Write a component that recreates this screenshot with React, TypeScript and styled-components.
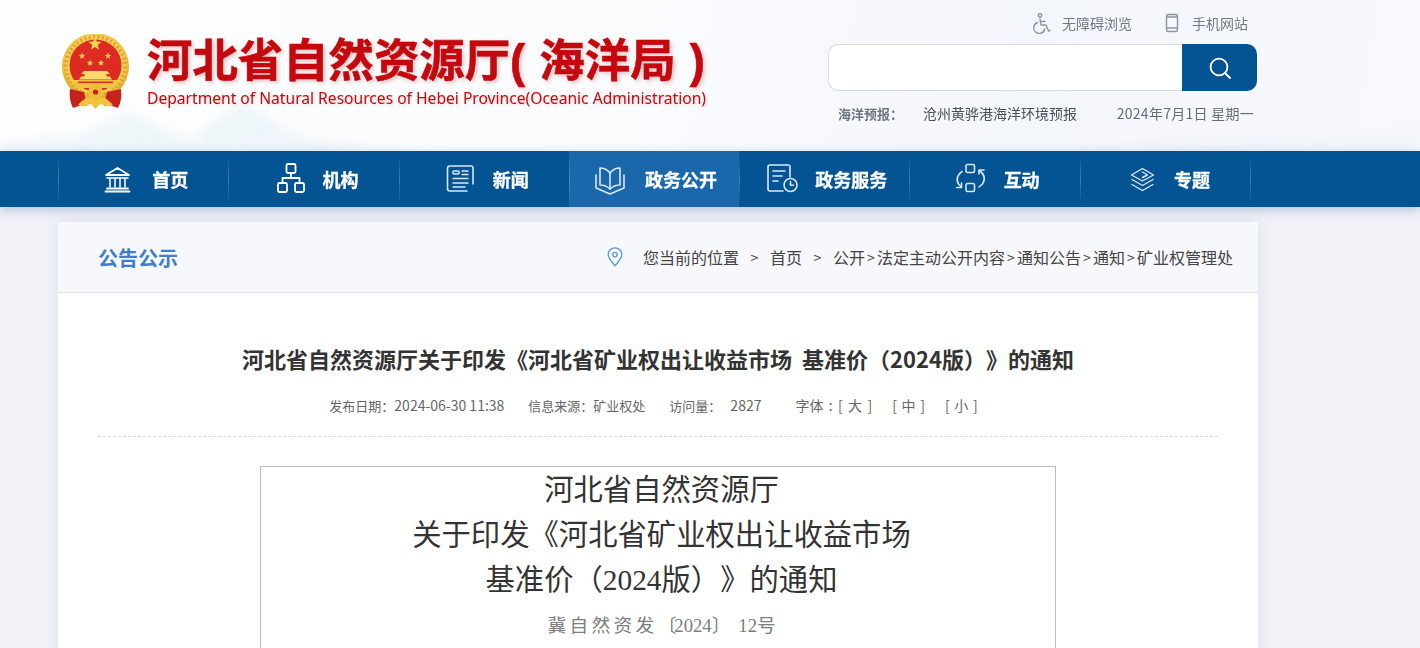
import React from 'react';
import styled, { createGlobalStyle } from 'styled-components';

const Global = createGlobalStyle`
  html, body { margin: 0; padding: 0; height: 648px; overflow: hidden; background: #f0f2f8; }
  body { font-family: "Noto Sans CJK SC", "Noto Sans", sans-serif; color: #333; text-spacing-trim: space-all; font-feature-settings: "chws" 0, "palt" 0, "halt" 0; }
  #root { height: 648px; overflow: hidden; }
`;

const Page = styled.div`
  display: flex;
  flex-direction: column;
  height: 648px;
  overflow: hidden;
`;

const Header = styled.header`
  position: relative;
  height: 151px;
  flex: none;
  background: linear-gradient(100deg, #fdfefe 0%, #fafbfd 45%, #f3f6fb 72%, #f7f9fc 100%);
  overflow: hidden;
`;

const Mountains = styled.svg`
  position: absolute;
  left: 0;
  bottom: 0;
  width: 1420px;
  height: 60px;
  opacity: 0.6;
`;

const HeaderInner = styled.div`
  position: relative;
  display: flex;
  justify-content: space-between;
  width: 1199px;
  height: 151px;
  margin-left: 58px;
`;

const Logo = styled.div`
  display: flex;
  align-items: flex-start;
  gap: 14px;
  padding: 34px 0 0 2px;
`;

const LogoText = styled.div`
  display: flex;
  flex-direction: column;
  padding-left: 1px;
`;

const LogoTitle = styled.div`
  font-family: "Liberation Sans", "Noto Sans CJK SC", sans-serif;
  font-size: 45.4px;
  line-height: 51px;
  margin-top: 2px;
  font-weight: 700;
  color: #c5080e;
  white-space: pre;
  word-spacing: 1.5px;
  -webkit-text-stroke: 0.6px #c5080e;
  text-shadow: 2px 2px 4px rgba(140, 30, 30, 0.28);
`;

const LogoSub = styled.div`
  font-family: "Noto Sans", sans-serif;
  font-size: 15.62px;
  line-height: 22px;
  color: #c5080e;
  white-space: nowrap;
  text-shadow: 1px 1px 3px rgba(140, 30, 30, 0.2);
`;

const Tools = styled.div`
  width: 429px;
  display: flex;
  flex-direction: column;
`;

const Links = styled.div`
  display: flex;
  justify-content: flex-end;
  align-items: center;
  height: 44px;
  padding: 2px 9px 0 0;
  gap: 30px;
  box-sizing: border-box;
`;

const LinkItem = styled.span`
  display: flex;
  align-items: center;
  gap: 8px;
  font-size: 14px;
  line-height: 20px;
  color: #707a86;
`;

const LinkIcon = styled.svg`
  width: 22px;
  height: 22px;
  fill: none;
  stroke: #8b95a1;
  stroke-width: 1.4;
  stroke-linecap: round;
  stroke-linejoin: round;
`;

const Search = styled.div`
  display: flex;
  height: 47px;
`;

const SearchInput = styled.div`
  flex: 1;
  box-sizing: border-box;
  background: #fff;
  border: 1px solid #d9dbe2;
  border-right: none;
  border-radius: 10px 0 0 10px;
`;

const SearchButton = styled.div`
  width: 75px;
  border-radius: 0 10px 10px 0;
  background: #045493;
  display: flex;
  align-items: center;
  justify-content: center;
`;

const Forecast = styled.div`
  display: flex;
  align-items: center;
  height: 20px;
  margin-top: 12px;
  padding: 0 3px 0 10px;
  font-size: 14px;
  color: #4a4f57;
`;

const ForecastLabel = styled.span`
  color: #6d7680;
  font-weight: 700;
  font-size: 13px;
  width: 85px;
`;

const ForecastDate = styled.span`
  margin-left: auto;
  color: #666d76;
  letter-spacing: 0.27px;
`;

const Nav = styled.nav`
  position: relative;
  z-index: 2;
  flex: none;
  display: flex;
  height: 56px;
  padding-left: 58px;
  background: #045493;
  box-shadow: 0 3px 10px rgba(40, 70, 130, 0.28);
`;

const NavItem = styled.div<{ $active?: boolean }>`
  position: relative;
  width: 170.3px;
  box-sizing: border-box;
  padding-left: 4px;
  display: flex;
  align-items: center;
  justify-content: center;
  gap: 16px;
  background: ${(p) => (p.$active ? '#1a67ab' : 'transparent')};
  font-size: 18px;
  font-weight: 700;
  color: #fff;
  -webkit-text-stroke: 0.3px #fff;
  &::before {
    content: '';
    position: absolute;
    left: 0;
    top: 4px;
    bottom: 4px;
    width: 1px;
    background: linear-gradient(180deg, rgba(255,255,255,0), rgba(255,255,255,0.24) 50%, rgba(255,255,255,0));
  }
`;

const NavEnd = styled.div`
  width: 1px;
  margin: 4px 0;
  background: linear-gradient(180deg, rgba(255,255,255,0), rgba(255,255,255,0.24) 50%, rgba(255,255,255,0));
`;

const Main = styled.main`
  flex: 1;
  padding: 15px 0 0 58px;
  background: #f0f2f8;
`;

const Card = styled.section`
  width: 1200px;
  height: 600px;
  background: #fff;
  box-shadow: 0 0 14px rgba(60, 80, 130, 0.1);
`;

const CardHead = styled.div`
  display: flex;
  align-items: center;
  justify-content: space-between;
  height: 71px;
  padding: 0 25px 1px 40px;
  box-sizing: border-box;
  background: #f7f8fb;
  border-bottom: 1px solid #e2e3e6;
`;

const CardTitle = styled.h2`
  margin: 2px 0 0;
  font-size: 20px;
  line-height: 28px;
  font-weight: 700;
  color: #3f7ecf;
`;

const Crumbs = styled.div`
  display: flex;
  align-items: center;
  font-size: 16px;
  line-height: 24px;
  color: #444;
  white-space: nowrap;
`;

const PinBox = styled.span`
  display: flex;
  margin-right: 20px;
`;

const Gap = styled.span`
  width: 31px;
  text-align: center;
  font-size: 14px;
`;

const Arrow = styled.span`
  display: inline-block;
  width: 12px;
  text-align: center;
  font-size: 14px;
`;

const CardBody = styled.div`
  padding: 0 40px;
`;

const Headline = styled.h1`
  margin: 0;
  padding-top: 48px;
  font-size: 22px;
  line-height: 34px;
  font-weight: 700;
  text-align: center;
  color: #333;
  white-space: nowrap;
  word-spacing: 5px;
`;

const Meta = styled.div`
  display: flex;
  justify-content: center;
  align-items: center;
  height: 24px;
  margin-top: 18px;
  padding: 0 9px 19px 0;
  border-bottom: 1px dashed #d9d9d9;
  font-size: 13px;
  color: #666;
  white-space: nowrap;
`;

const MetaItem = styled.span<{ $gap?: number }>`
  margin-right: ${(p) => p.$gap ?? 24}px;
`;

const MetaValue = styled.span<{ $indent?: number; $words?: number }>`
  font-size: 14px;
  margin-left: ${(p) => p.$indent ?? 0}px;
  word-spacing: ${(p) => p.$words ?? 0}px;
`;

const Doc = styled.div`
  width: 796px;
  height: 300px;
  margin: 29px 0 0 162px;
  padding: 1px 0 0 7px;
  box-sizing: border-box;
  border: 1px solid #bcbcbc;
  text-align: center;
`;

const DocTitle = styled.div`
  font-family: "Liberation Serif", "Noto Sans CJK SC", serif;
  font-size: 29.33px;
  line-height: 45px;
  color: #333;
  white-space: nowrap;
`;

const DocNo = styled.div`
  font-family: "Liberation Serif", "Noto Sans CJK SC", serif;
  font-size: 18.67px;
  line-height: 46px;
  color: #7d7d7d;
  white-space: nowrap;
`;

const Spaced = styled.span<{ $s: number }>`
  letter-spacing: ${(p) => p.$s}px;
`;

const NavSvg = styled.svg<{ $soft?: boolean; $w?: number }>`
  width: 34px;
  height: 34px;
  flex: none;
  fill: none;
  stroke: ${(p) => (p.$soft ? '#d8e6f5' : '#fff')};
  stroke-width: ${(p) => p.$w ?? 1.8};
  stroke-linejoin: round;
  stroke-linecap: round;
`;

const NavGlyph: React.FC<{ children: React.ReactNode; soft?: boolean; w?: number }> = ({ children, soft, w }) => (
  <NavSvg viewBox="0 0 34 34" aria-hidden="true" $soft={soft} $w={w}>
    {children}
  </NavSvg>
);

const Star = ({ x, y, r }: { x: number; y: number; r: number }) => {
  const pts: string[] = [];
  for (let i = 0; i < 10; i++) {
    const a = -Math.PI / 2 + (i * Math.PI) / 5;
    const q = i % 2 === 0 ? r : r * 0.42;
    pts.push(`${(x + q * Math.cos(a)).toFixed(2)},${(y + q * Math.sin(a)).toFixed(2)}`);
  }
  return <polygon points={pts.join(' ')} fill="#f8d24c" />;
};

const Emblem = () => (
  <svg width="72" height="78" viewBox="0 0 72 78" aria-hidden="true">
    <defs>
      <radialGradient id="g" cx="50%" cy="45%" r="55%">
        <stop offset="78%" stopColor="#f5cf58" />
        <stop offset="100%" stopColor="#dca222" />
      </radialGradient>
      <filter id="soft" x="-10%" y="-10%" width="120%" height="120%">
        <feGaussianBlur stdDeviation="0.35" />
      </filter>
    </defs>
    <g filter="url(#soft)">
      <circle cx="35.5" cy="32.5" r="33.5" fill="url(#g)" />
      <circle cx="35.5" cy="32.5" r="29.5" fill="none" stroke="#e0a62a" strokeWidth="4" strokeDasharray="2 2.4" />
      <circle cx="35.5" cy="31.5" r="26" fill="#dd2a20" />
      <Star x={35} y={10} r={7} />
      <Star x={22} y={22} r={3.4} />
      <Star x={48} y={22} r={3.4} />
      <Star x={30} y={29} r={3.4} />
      <Star x={41} y={29} r={3.4} />
      <path d="M24 37 h23 l3 3 h-3.5 v2.5 h3.5 l2 3 h-33 l2-3 h3.5 v-2.5 h-3.5z" fill="#f8da6c" />
      <path d="M14 46 h43 v3 l-3 5 h-37 l-3-5z" fill="#f2c33f" />
      <rect x="18" y="47.5" width="35" height="1.6" fill="#dd2a20" />
      <path d="M10 55 L24 58 L27 72 C22 71 18 72 13 74 C10 68 9 62 10 55 Z" fill="#c5201a" />
      <path d="M61 55 L47 58 L44 72 C49 71 53 72 58 74 C61 68 62 62 61 55 Z" fill="#c5201a" />
      <path d="M18 71 C22 66 27 63 31 63 L40 63 C44 63 49 66 53 71 C48 74 44 71 40 70 L35.5 75 L31 70 C27 71 23 74 18 71 Z" fill="#f2c33f" />
      <circle cx="35.5" cy="58" r="7.5" fill="#f0bd3a" />
      <circle cx="35.5" cy="58" r="2.6" fill="#c5241c" />
    </g>
  </svg>
);

const items: { label: string; icon: React.ReactNode; active?: boolean }[] = [
  {
    label: '首页',
    icon: (
      <NavGlyph>
        <path d="M4 13 L15.5 6 L27 13 Z" />
        <path d="M8 16 V25 M13 16 V25 M18 16 V25 M23 16 V25 M5 16 H26" strokeWidth="1.5" />
        <path d="M5 26.5 H26 M3.5 29.5 H27.5" />
      </NavGlyph>
    ),
  },
  {
    label: '机构',
    icon: (
      <NavGlyph>
        <rect x="14.5" y="2" width="9" height="9" rx="1.5" />
        <rect x="6" y="21" width="9" height="9" rx="1.5" />
        <rect x="23" y="21" width="9" height="9" rx="1.5" />
        <path d="M19 11 V16 M10.5 21 V16 H27.5 V21" />
      </NavGlyph>
    ),
  },
  {
    label: '新闻',
    icon: (
      <NavGlyph soft w={1.6}>
        <path d="M30 22 V6 a2 2 0 0 0-2-2 H7 a2.5 2.5 0 0 0-2.5 2.5 V26.5 a2.5 2.5 0 0 0 2.5 2.5 H24" />
        <rect x="10" y="9" width="6" height="3" rx="1" />
        <path d="M19 9 H25 M19 12.5 H25 M10 16.5 H25 M10 21 H25 M10 25 H22" strokeWidth="1.4" />
      </NavGlyph>
    ),
  },
  {
    label: '政务公开',
    active: true,
    icon: (
      <NavGlyph soft w={1.6}>
        <path d="M1 13 V26 L15 32 L29 26 V13" />
        <path d="M15 11 C12 7 9 6 5 6 V23 C9 23 12 24 15 27 C18 24 21 23 25 23 V6 C21 6 18 7 15 11 Z" />
        <path d="M15 11 V27" />
      </NavGlyph>
    ),
  },
  {
    label: '政务服务',
    icon: (
      <NavGlyph soft w={1.6}>
        <path d="M25 15 V5 a2 2 0 0 0-2-2 H5 a2 2 0 0 0-2 2 V27 a2 2 0 0 0 2 2 H18" />
        <path d="M8 9 H20 M8 14 H17 M8 19 H13" />
        <circle cx="25.5" cy="23" r="6.5" />
        <path d="M25.5 19.5 V23.2 H28.5" />
      </NavGlyph>
    ),
  },
  {
    label: '互动',
    icon: (
      <NavGlyph soft w={1.6}>
        <rect x="12" y="2.5" width="8.5" height="8" rx="1.5" />
        <rect x="12" y="21.5" width="8.5" height="8" rx="1.5" />
        <path d="M8 9.5 C4 12 1.5 17 4.5 22 L7 24.5" />
        <path d="M2.5 25.5 H7.5 V21" />
        <path d="M25 8.5 C30 11 32 17 28.5 22 L25 25" />
        <path d="M25 8 H30 M25 8 V12" />
      </NavGlyph>
    ),
  },
  {
    label: '专题',
    icon: (
      <NavGlyph soft w={1.4}>
        <path d="M18.5 6.5 L29.5 13 L18.5 19 L7.5 13 Z" />
        <path d="M18.5 10 L23.5 13 L18.5 15.5" />
        <path d="M8 17.5 L18.5 23.5 L29 17.5" />
        <path d="M8 22.5 L18.5 28.5 L29 22.5" />
      </NavGlyph>
    ),
  },
];

export default function App() {
  return (
    <Page>
      <Global />
      <Header>
        <Mountains viewBox="0 0 1420 60" aria-hidden="true">
          <defs>
            <filter id="haze" x="-10%" y="-30%" width="120%" height="160%">
              <feGaussianBlur stdDeviation="5" />
            </filter>
          </defs>
          <g filter="url(#haze)">
            <path d="M30 66 L130 22 L190 50 L240 12 L300 46 L420 66 Z" fill="#dfecf6" opacity="0.75" />
            <path d="M0 66 V50 L70 44 L140 56 L260 50 L480 66 Z" fill="#e9f1f8" opacity="0.8" />
            <path d="M1040 66 C1120 50 1190 54 1260 42 C1320 50 1370 46 1420 36 V66 Z" fill="#eaf0f8" opacity="0.6" />
          </g>
        </Mountains>
        <HeaderInner>
          <Logo>
            <Emblem />
            <LogoText>
              <LogoTitle>河北省自然资源厅( 海洋局 )</LogoTitle>
              <LogoSub>Department of Natural Resources of Hebei Province(Oceanic Administration)</LogoSub>
            </LogoText>
          </Logo>
          <Tools>
            <Links>
              <LinkItem>
                <LinkIcon viewBox="0 0 22 22" aria-hidden="true">
                  <circle cx="8" cy="3.5" r="1.7" />
                  <path d="M8 7 L9 13 H14 L16.5 19 L18 18.4" />
                  <path d="M8.5 9.5 H13" />
                  <path d="M5.5 10.5 A5.6 5.6 0 1 0 12.8 17" />
                </LinkIcon>
                无障碍浏览
              </LinkItem>
              <LinkItem>
                <LinkIcon viewBox="0 0 22 22" aria-hidden="true">
                  <rect x="4.5" y="2.5" width="11" height="17" rx="2" />
                  <path d="M4.5 16 H15.5 M4.5 5 H15.5" />
                </LinkIcon>
                手机网站
              </LinkItem>
            </Links>
            <Search>
              <SearchInput />
              <SearchButton>
                <svg width="24" height="24" viewBox="0 0 24 24" fill="none" stroke="#fff" strokeWidth="1.8" strokeLinecap="round" aria-hidden="true">
                  <circle cx="11" cy="11" r="8.4" />
                  <path d="M17 17 L22 22" />
                </svg>
              </SearchButton>
            </Search>
            <Forecast>
              <ForecastLabel>{'海洋预报\uFF1A'}</ForecastLabel>
              <span>沧州黄骅港海洋环境预报</span>
              <ForecastDate>2024年7月1日 星期一</ForecastDate>
            </Forecast>
          </Tools>
        </HeaderInner>
      </Header>
      <Nav>
        {items.map((it) => (
          <NavItem key={it.label} $active={it.active}>
            {it.icon}
            <span>{it.label}</span>
          </NavItem>
        ))}
        <NavEnd />
      </Nav>
      <Main>
        <Card>
          <CardHead>
            <CardTitle>公告公示</CardTitle>
            <Crumbs>
              <PinBox>
                <svg width="16" height="20" viewBox="0 0 16 20" fill="none" stroke="#5b97dc" strokeWidth="1.3" aria-hidden="true">
                  <path d="M8 18.8 C5 15 1.2 11.5 1.2 7.6 A6.8 6.8 0 0 1 14.8 7.6 C14.8 11.5 11 15 8 18.8 Z" />
                  <circle cx="8" cy="7.6" r="2.2" />
                </svg>
              </PinBox>
              您当前的位置<Gap>&gt;</Gap>首页<Gap>&gt;</Gap>公开<Arrow>&gt;</Arrow>法定主动公开内容<Arrow>&gt;</Arrow>通知公告<Arrow>&gt;</Arrow>通知<Arrow>&gt;</Arrow>矿业权管理处
            </Crumbs>
          </CardHead>
          <CardBody>
            <Headline>{'河北省自然资源厅关于印发《河北省矿业权出让收益市场 基准价\uFF082024版\uFF09》的通知'}</Headline>
            <Meta>
              <MetaItem>{'发布日期\uFF1A'}<MetaValue>2024-06-30 11:38</MetaValue></MetaItem>
              <MetaItem>{'信息来源\uFF1A矿业权处'}</MetaItem>
              <MetaItem $gap={34}>{'访问量\uFF1A'}<MetaValue $indent={9}>2827</MetaValue></MetaItem>
              <MetaItem $gap={20}><MetaValue $words={2.2}>字体 : [ 大 ]</MetaValue></MetaItem>
              <MetaItem $gap={20}><MetaValue $words={1.5}>[ 中 ]</MetaValue></MetaItem>
              <MetaItem $gap={0}><MetaValue $words={1.5}>[ 小 ]</MetaValue></MetaItem>
            </Meta>
            <Doc>
              <DocTitle>河北省自然资源厅</DocTitle>
              <DocTitle>关于印发《河北省矿业权出让收益市场</DocTitle>
              <DocTitle>{'基准价\uFF082024版\uFF09》的通知'}</DocTitle>
              <DocNo><Spaced $s={3.4}>冀自然资发</Spaced><Spaced $s={-2}>〔</Spaced>2024<Spaced $s={8}>〕</Spaced>12号</DocNo>
            </Doc>
          </CardBody>
        </Card>
      </Main>
    </Page>
  );
}
